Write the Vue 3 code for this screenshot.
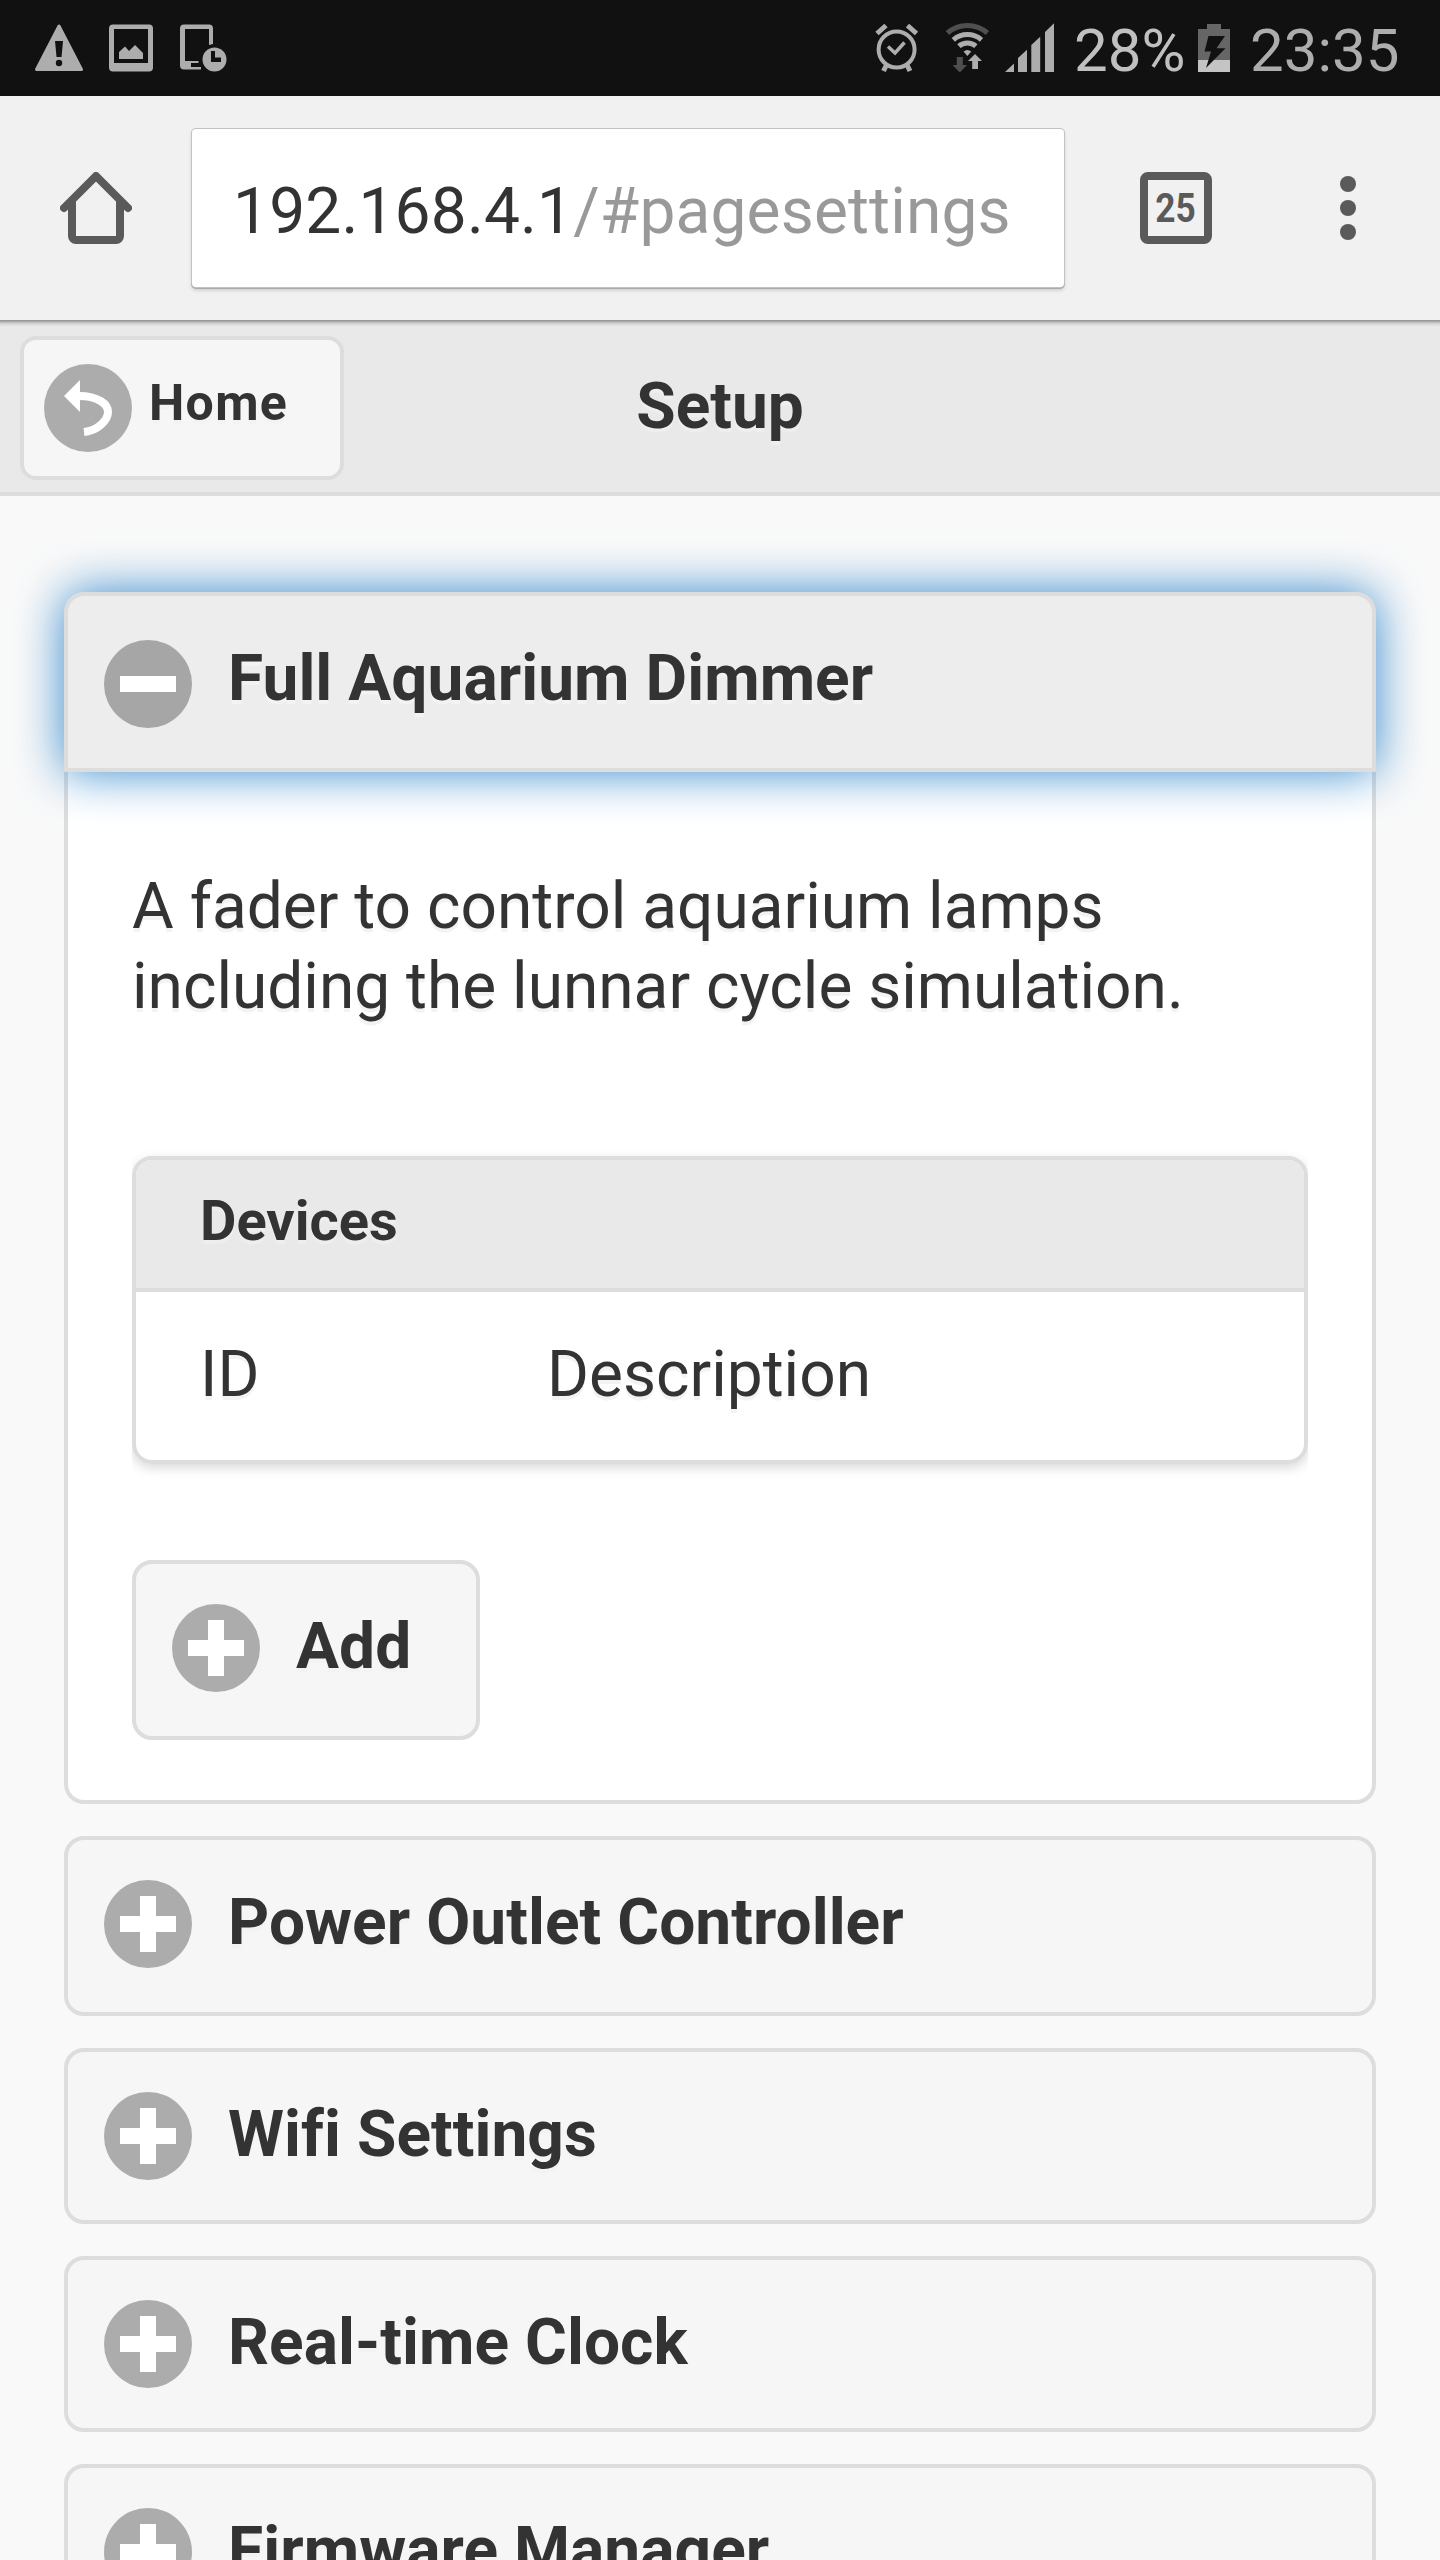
<script setup>
const collapsed = [
  { title: 'Power Outlet Controller', tall: true },
  { title: 'Wifi Settings' },
  { title: 'Real-time Clock' },
  { title: 'Firmware Manager' },
]
</script>

<template>
  <div class="screen">
    <div class="status">
      <svg class="status-left" width="240" height="96" viewBox="0 0 240 96">
        <path d="M59 26 36.500 69.500H81.500Z" fill="#adadad" stroke="#adadad" stroke-width="3" stroke-linejoin="round" />
        <path d="M55 41h8l-1.500 16h-5z" fill="#111" />
        <circle cx="59" cy="63" r="3.200" fill="#111" />
        <path fill-rule="evenodd" fill="#adadad" d="M113 24.500h36a4 4 0 0 1 4 4v39a4 4 0 0 1-4 4h-36a4 4 0 0 1-4-4v-39a4 4 0 0 1 4-4zM114 29v34h34V29z" />
        <path d="M119 52l6-5.500 4 4.500 6-6 8 8v6h-24z" fill="#adadad" />
        <path d="M184 24.500h25a4 4 0 0 1 4 4V44l-4 1V29h-24v32h13.500v2H191v4h10v2.500h-17a4 4 0 0 1-4-4v-37a4 4 0 0 1 4-4z" fill="#adadad" />
        <circle cx="214.500" cy="59.500" r="12" fill="#adadad" />
        <path d="M211 51h4v6.500h6V62h-10z" fill="#111" />
      </svg>
      <svg class="status-right" width="224" height="96" viewBox="840 0 224 96">
        <g fill="none" stroke="#adadad">
          <circle cx="896.600" cy="49.500" r="18" stroke-width="4" />
          <path d="M888 46.500l7 6.500 9.500-10.500" stroke-width="3.500" />
          <path d="M877 33.500l9-8M907.500 25.500l9 8" stroke-width="5" />
          <path d="M886.500 65l-3 6M907 65l3 6" stroke-width="5" />
        </g>
        <path d="M947.400 33a30.500 30.500 0 0 1 40 0" fill="none" stroke="#4f4f4f" stroke-width="5" />
        <path d="M953.300 39.800a21.500 21.500 0 0 1 28.200 0M958.900 46.200a13 13 0 0 1 17 0" fill="none" stroke="#adadad" stroke-width="5" />
        <path d="M963.500 51.500q3.900-3 7.800 0l-3.900 4.500z" fill="#adadad" />
        <path d="M956.800 57h6v8h4.200l-7.200 7.500-7.300-7.500h4.300z" fill="#4f4f4f" />
        <path d="M975 54l7 7h-4v8h-5.800v-8H968z" fill="#adadad" />
        <path d="M1005 72l9-8.500V72zM1018 72V58l9-8.300V72zM1031.300 72V45l8.900-8.300V72zM1045 72V32l9-8.700V72z" fill="#adadad" />
      </svg>
      <span class="percent">28%</span>
      <svg class="battery" width="32" height="96" viewBox="1198 0 32 96">
        <path d="M1207 24h14v5h9v43h-32V29h9z" fill="#666" />
        <path d="M1198 60h32v12h-32z" fill="#c4c4c4" />
        <path d="M1208.500 36H1225l-8.500 12.300h9L1206 68l5-16.500h-6.500z" fill="#111" />
      </svg>
      <span class="time">23:35</span>
    </div>

    <div class="toolbar">
      <svg class="house" width="72" height="72" viewBox="60 172 72 72" fill="none" stroke="#5a5a5a" stroke-width="8">
        <path d="M64 208l32-32 32 32" stroke-linecap="round" stroke-linejoin="round" />
        <path d="M72 202v34a4 4 0 0 0 4 4h40a4 4 0 0 0 4-4v-34" />
      </svg>
      <div class="omnibox">192.168.4.1<span class="path">/#pagesettings</span></div>
      <div class="tabs"><span class="tab-count">25</span></div>
      <div class="menu"><i class="dot"></i><i class="dot"></i><i class="dot"></i></div>
    </div>

    <header class="page-head">
      <div class="home-btn">
        <svg width="88" height="88" viewBox="0 0 88 88">
          <circle cx="44" cy="44" r="44" fill="#acacac" />
          <path d="M20 32l16-16v32z" fill="#fff" />
          <path d="M35 32C54 32 64 40 64 48S54 66.500 40 68" fill="none" stroke="#fff" stroke-width="8" />
        </svg>
        <span>Home</span>
      </div>
      <h1 class="title">Setup</h1>
    </header>

    <main class="content">
      <section class="open">
        <div class="bar active">
          <svg class="icon" width="88" height="88" viewBox="0 0 88 88">
            <circle cx="44" cy="44" r="44" fill="#a6a6a6" />
            <path d="M16 36h56v16H16z" fill="#fff" />
          </svg>
          <span>Full Aquarium Dimmer</span>
        </div>
        <div class="panel">
          <p class="text">A fader to control aquarium lamps<br>including the lunnar cycle simulation.</p>
          <div class="devices">
            <div class="devices-head">Devices</div>
            <div class="devices-row"><span class="col-id">ID</span><span>Description</span></div>
          </div>
          <div class="bar add tall">
            <svg class="icon" width="88" height="88" viewBox="0 0 88 88">
              <circle cx="44" cy="44" r="44" fill="#acacac" />
              <path d="M36 16h16v20h20v16H52v20H36V52H16V36h20z" fill="#fff" />
            </svg>
            <span>Add</span>
          </div>
        </div>
      </section>
      <div v-for="item in collapsed" :key="item.title" class="bar" :class="{ tall: item.tall }">
        <svg class="icon" width="88" height="88" viewBox="0 0 88 88">
          <circle cx="44" cy="44" r="44" fill="#acacac" />
          <path d="M36 16h16v20h20v16H52v20H36V52H16V36h20z" fill="#fff" />
        </svg>
        <span>{{ item.title }}</span>
      </div>
    </main>
  </div>
</template>

<style>
html,
body {
  margin: 0;
  overflow: hidden;
  background: #f9f9f9;
}
</style>

<style scoped>
.screen {
  box-sizing: border-box;
  width: 1440px;
  height: 2560px;
  overflow: hidden;
  background: #f9f9f9;
  color: #333;
  font-family: Roboto, "Liberation Sans", sans-serif;
  font-size: 64px;
  font-variant-ligatures: none;
}
.screen svg {
  display: block;
  flex: none;
}
.status {
  display: flex;
  height: 96px;
  background: #111;
  font-size: 60px;
  line-height: 102px;
  white-space: nowrap;
}
.status-right {
  margin-left: 600px;
}
.percent {
  width: 124px;
  margin-left: 10px;
  color: #c0c0c0;
}
.time {
  margin-left: 20px;
  color: #adadad;
}
.toolbar {
  position: relative;
  display: flex;
  box-sizing: border-box;
  height: 224px;
  padding-top: 32px;
  background: #f1f1f1;
  box-shadow: 0 1px 0 #999, 0 2px 0 #aaa, 0 3px 0 #bebebe, 0 4px 0 #d2d2d2, 0 5px 2px rgba(0, 0, 0, 0.1);
}
.house {
  margin: 44px 0 0 60px;
}
.omnibox {
  box-sizing: border-box;
  width: 872px;
  height: 158px;
  margin: 1px 0 0 60px;
  padding: 4px 0 0 41px;
  border-radius: 4px;
  background: #fff;
  box-shadow: 0 0 0 1px #c2c2c2, 0 1px 0 1px #aaa, 0 3px 4px rgba(0, 0, 0, 0.18);
  letter-spacing: 0.17px;
  line-height: 158px;
  white-space: nowrap;
}
.path {
  color: #999;
}
.tabs {
  display: flex;
  justify-content: center;
  box-sizing: border-box;
  width: 72px;
  height: 72px;
  margin: 44px 0 0 76px;
  border: 8px solid #5a5a5a;
  border-radius: 8px;
  color: #5a5a5a;
  font-size: 41px;
  font-weight: 700;
  line-height: 56px;
}
.tab-count {
  transform: scaleX(0.86);
}
.menu {
  display: flex;
  flex-direction: column;
  gap: 8px;
  margin: 48px 0 0 128px;
}
.dot {
  width: 16px;
  height: 16px;
  border-radius: 50%;
  background: #5a5a5a;
}
.page-head {
  display: grid;
  grid-template-columns: 344px 1fr 344px;
  box-sizing: border-box;
  height: 176px;
  border-bottom: 4px solid #ddd;
  background: #e9e9e9;
  font-weight: 700;
  text-shadow: 0 4px 0 #f3f3f3;
}
.home-btn {
  display: flex;
  box-sizing: border-box;
  width: 324px;
  height: 144px;
  margin: 16px 0 0 20px;
  padding-left: 20px;
  border: 4px solid #ddd;
  border-radius: 16px;
  background: #f6f6f6;
  font-size: 50px;
  letter-spacing: 1.3px;
  line-height: 126px;
}
.home-btn svg {
  margin: 24px 17px 0 0;
}
.title {
  margin: 0;
  font-size: 64px;
  font-weight: 700;
  line-height: 174px;
  text-align: center;
  text-shadow: 0 4px 0 #eee;
}
.content {
  display: flex;
  flex-direction: column;
  gap: 32px;
  padding: 96px 64px 0;
  text-shadow: 0 4px 0 #f3f3f3;
}
.bar {
  display: flex;
  flex: none;
  gap: 36px;
  box-sizing: border-box;
  height: 176px;
  padding-left: 36px;
  border: 4px solid #ddd;
  border-radius: 20px;
  background: #f6f6f6;
  font-weight: 700;
  letter-spacing: 0.05px;
  line-height: 166px;
  white-space: nowrap;
}
.bar .icon {
  margin-top: 40px;
}
.bar.tall,
.bar.active {
  height: 180px;
}
.bar.active {
  position: relative;
  border-radius: 20px 20px 0 0;
  background: #ededed;
  box-shadow: 0 0 48px #38c;
}
.bar.active .icon {
  margin-top: 44px;
}
.panel {
  box-sizing: border-box;
  height: 1032px;
  padding: 95px 64px 0;
  border: 4px solid #ddd;
  border-top: 0;
  border-radius: 0 0 20px 20px;
  background: #fff;
}
.text {
  margin: 0;
  line-height: 80px;
  white-space: nowrap;
}
.devices {
  box-sizing: border-box;
  height: 308px;
  margin-top: 129px;
  border: 4px solid #ddd;
  border-radius: 20px;
  box-shadow: 0 4px 12px rgba(0, 0, 0, 0.15);
  clip-path: inset(-24px 0);
}
.devices-head {
  box-sizing: border-box;
  height: 132px;
  padding-left: 64px;
  border-bottom: 4px solid #ddd;
  border-radius: 16px 16px 0 0;
  background: #e9e9e9;
  font-size: 56px;
  font-weight: 700;
  line-height: 122px;
  text-shadow: 0 4px 0 #eee;
}
.devices-row {
  display: flex;
  padding-left: 64px;
  line-height: 166px;
}
.col-id {
  width: 347px;
}
.add {
  width: 348px;
  margin-top: 96px;
}
</style>
